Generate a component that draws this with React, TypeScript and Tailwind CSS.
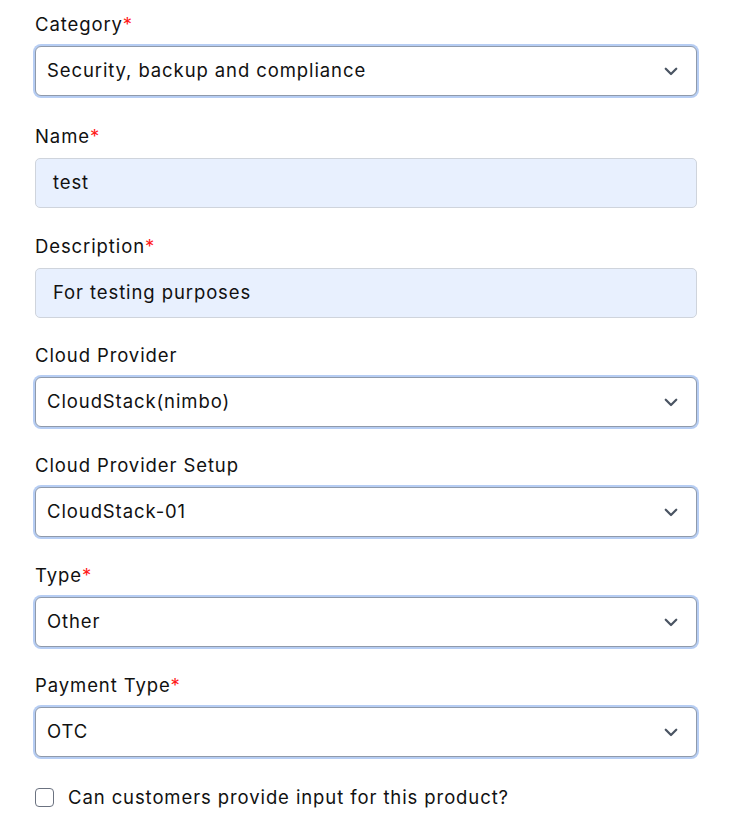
import { useState } from "react";

type Field = {
  kind: "select" | "input";
  label: string;
  required?: boolean;
  value: string;
  gap: string;
};

const FIELDS: Field[] = [
  { kind: "select", label: "Category", required: true, value: "Security, backup and compliance", gap: "mb-[28px]" },
  { kind: "input", label: "Name", required: true, value: "test", gap: "mb-[26px]" },
  { kind: "input", label: "Description", required: true, value: "For testing purposes", gap: "mb-[25px]" },
  { kind: "select", label: "Cloud Provider", value: "CloudStack(nimbo)", gap: "mb-[26px]" },
  { kind: "select", label: "Cloud Provider Setup", value: "CloudStack-01", gap: "mb-[26px]" },
  { kind: "select", label: "Type", required: true, value: "Other", gap: "mb-[26px]" },
  { kind: "select", label: "Payment Type", required: true, value: "OTC", gap: "mb-[28px]" },
];

function Chevron() {
  return (
    <svg width="18" height="18" viewBox="0 0 24 24" fill="none" stroke="#4b5563" strokeWidth="3" strokeLinecap="round" strokeLinejoin="round">
      <path d="M5 9l7 7 7-7" />
    </svg>
  );
}

export default function App() {
  const [checked, setChecked] = useState(false);

  return (
    <div className="min-h-screen bg-white pl-[35px] pr-[37px] pt-[12px] text-[#111] font-['Inter','Open_Sans',sans-serif] text-[18.5px] tracking-[0.9px]">
      {FIELDS.map((f) => (
        <div key={f.label} className={f.gap}>
          <label className="block leading-[24px] mb-[10px]">
            {f.label}
            {f.required && <span className="text-[#ff1a1a]">*</span>}
          </label>
          {f.kind === "select" ? (
            <div className="flex h-[50px] items-center justify-between rounded-[6px] border border-[#8f9aab] bg-white pl-[11px] pr-[16px] shadow-[0_0_0_2px_#b6cdf3]">
              <span>{f.value}</span>
              <Chevron />
            </div>
          ) : (
            <div className="flex h-[50px] items-center rounded-[5px] border border-[#cfd4dc] bg-[#e8f0fe] pl-[17px]">
              <span>{f.value}</span>
            </div>
          )}
        </div>
      ))}
      <label className="flex items-center gap-[14px] cursor-pointer">
        <span
          onClick={() => setChecked(!checked)}
          className="h-[19px] w-[19px] rounded-[4px] border border-[#6b7280] bg-white"
        />
        <span className="leading-[24px]">Can customers provide input for this product?</span>
      </label>
    </div>
  );
}
